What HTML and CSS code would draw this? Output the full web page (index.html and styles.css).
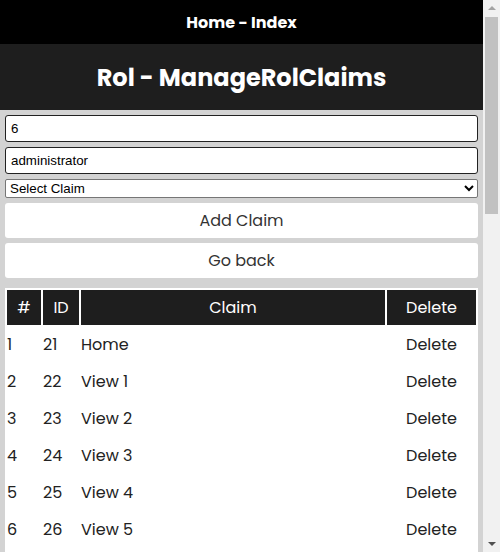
FILE: index.html
```html
<!DOCTYPE html>
<html>
<head>
<meta charset="utf-8">
<title>Rol - ManageRolClaims</title>
<link rel="stylesheet" href="styles.css">
</head>
<body>
<div class="page">
<nav class="topbar">Home - Index</nav>
<header class="pagehead"><h1>Rol - ManageRolClaims</h1></header>
<main class="content">
  <form class="form">
    <input class="field" type="text" value="6">
    <input class="field" type="text" value="administrator">
    <select class="select"><option>Select Claim</option></select>
    <button class="btn" type="button">Add Claim</button>
    <button class="btn" type="button">Go back</button>
  </form>
  <table class="claims">
    <thead>
      <tr><th class="c-num">#</th><th class="c-id">ID</th><th class="c-claim">Claim</th><th class="c-del">Delete</th></tr>
    </thead>
    <tbody>
      <tr><td>1</td><td>21</td><td>Home</td><td class="del">Delete</td></tr>
      <tr><td>2</td><td>22</td><td>View 1</td><td class="del">Delete</td></tr>
      <tr><td>3</td><td>23</td><td>View 2</td><td class="del">Delete</td></tr>
      <tr><td>4</td><td>24</td><td>View 3</td><td class="del">Delete</td></tr>
      <tr><td>5</td><td>25</td><td>View 4</td><td class="del">Delete</td></tr>
      <tr><td>6</td><td>26</td><td>View 5</td><td class="del">Delete</td></tr>
      <tr><td>7</td><td>27</td><td>View 6</td><td class="del">Delete</td></tr>
      <tr><td>8</td><td>28</td><td>View 7</td><td class="del">Delete</td></tr>
      <tr><td>9</td><td>29</td><td>View 8</td><td class="del">Delete</td></tr>
      <tr><td>10</td><td>30</td><td>View 9</td><td class="del">Delete</td></tr>
      <tr><td>11</td><td>31</td><td>View 10</td><td class="del">Delete</td></tr>
      <tr><td>12</td><td>32</td><td>View 11</td><td class="del">Delete</td></tr>
      <tr><td>13</td><td>33</td><td>View 12</td><td class="del">Delete</td></tr>
      <tr><td>14</td><td>34</td><td>View 13</td><td class="del">Delete</td></tr>
      <tr><td>15</td><td>35</td><td>View 14</td><td class="del">Delete</td></tr>
      <tr><td>16</td><td>36</td><td>View 15</td><td class="del">Delete</td></tr>
      <tr><td>17</td><td>37</td><td>View 16</td><td class="del">Delete</td></tr>
      <tr><td>18</td><td>38</td><td>View 17</td><td class="del">Delete</td></tr>
      <tr><td>19</td><td>39</td><td>View 18</td><td class="del">Delete</td></tr>
      <tr><td>20</td><td>40</td><td>View 19</td><td class="del">Delete</td></tr>
      <tr><td>21</td><td>41</td><td>View 20</td><td class="del">Delete</td></tr>
      <tr><td>22</td><td>42</td><td>View 21</td><td class="del">Delete</td></tr>
      <tr><td>23</td><td>43</td><td>View 22</td><td class="del">Delete</td></tr>
      <tr><td>24</td><td>44</td><td>View 23</td><td class="del">Delete</td></tr>
      <tr><td>25</td><td>45</td><td>View 24</td><td class="del">Delete</td></tr>
      <tr><td>26</td><td>46</td><td>View 25</td><td class="del">Delete</td></tr>
      <tr><td>27</td><td>47</td><td>View 26</td><td class="del">Delete</td></tr>
      <tr><td>28</td><td>48</td><td>View 27</td><td class="del">Delete</td></tr>
      <tr><td>29</td><td>49</td><td>View 28</td><td class="del">Delete</td></tr>
      <tr><td>30</td><td>50</td><td>View 29</td><td class="del">Delete</td></tr>
    </tbody>
  </table>
</main>
</div>
<div class="scrollbar" aria-hidden="true">
  <div class="sb-btn"><span class="arrow-up"></span></div>
  <div class="sb-track"><div class="sb-thumb"></div></div>
  <div class="sb-btn"><span class="arrow-down"></span></div>
</div>
</body>
</html>
```

FILE: styles.css
```css
html, body {
  margin: 0;
  padding: 0;
}
body {
  background: #d3d3d3;
  font-family: "Poppins", "Open Sans", sans-serif;
  color: #222;
}
.page {
  margin-right: 17px;
}
.scrollbar {
  position: fixed;
  top: 0;
  right: 0;
  width: 17px;
  height: 100vh;
  background: #f1f1f1;
  display: flex;
  flex-direction: column;
}
.sb-btn {
  height: 17px;
  flex: none;
  display: flex;
  align-items: center;
  justify-content: center;
}
.arrow-up {
  width: 0;
  height: 0;
  border-left: 4px solid transparent;
  border-right: 4px solid transparent;
  border-bottom: 4px solid #a3a3a3;
  margin-top: -1px;
}
.arrow-down {
  width: 0;
  height: 0;
  border-left: 4px solid transparent;
  border-right: 4px solid transparent;
  border-top: 4px solid #505050;
  margin-top: 1px;
}
.sb-track {
  flex: 1;
  padding: 0 2px;
}
.sb-thumb {
  height: 197px;
  background: #c1c1c1;
}
.topbar {
  height: 44px;
  background: #000;
  color: #fff;
  font-weight: 700;
  font-size: 16px;
  display: flex;
  align-items: center;
  justify-content: center;
}
.pagehead {
  height: 66px;
  background: #1e1e1e;
  color: #fff;
  display: flex;
  align-items: center;
  justify-content: center;
}
.pagehead h1 {
  margin: 0;
  font-size: 24px;
  font-weight: 700;
}
.content {
  padding: 5px;
}
.form {
  display: flex;
  flex-direction: column;
  gap: 5px;
  margin: 0;
}
.field {
  box-sizing: border-box;
  width: 100%;
  height: 27px;
  margin: 0;
  padding: 0 5px;
  border: 1px solid #222;
  border-radius: 3px;
  font-family: Arial, "Liberation Sans", sans-serif;
  font-size: 13.33px;
  color: #000;
  background: #fff;
}
.select {
  box-sizing: border-box;
  width: 100%;
  height: 19px;
  margin: 0;
  font-family: Arial, "Liberation Sans", sans-serif;
  font-size: 13.33px;
  color: #000;
  background: #fff;
  border: 1px solid #767676;
  border-radius: 2px;
}
.btn {
  height: 35px;
  width: 100%;
  margin: 0;
  border: none;
  border-radius: 3px;
  background: #fff;
  font-family: "Poppins", "Open Sans", sans-serif;
  font-size: 16px;
  color: #333;
}
.claims {
  width: 100%;
  margin-top: 10px;
  background: #fff;
  border-spacing: 2px;
  font-size: 16px;
}
.claims th {
  height: 35px;
  padding: 0;
  background: #1e1e1e;
  color: #fff;
  font-weight: 400;
  text-align: center;
}
.claims td {
  height: 35px;
  padding: 0;
  color: #222;
}
.c-num { width: 34px; }
.c-id { width: 36px; }
.c-del { width: 89px; }
.claims td.del {
  text-align: center;
}
```
